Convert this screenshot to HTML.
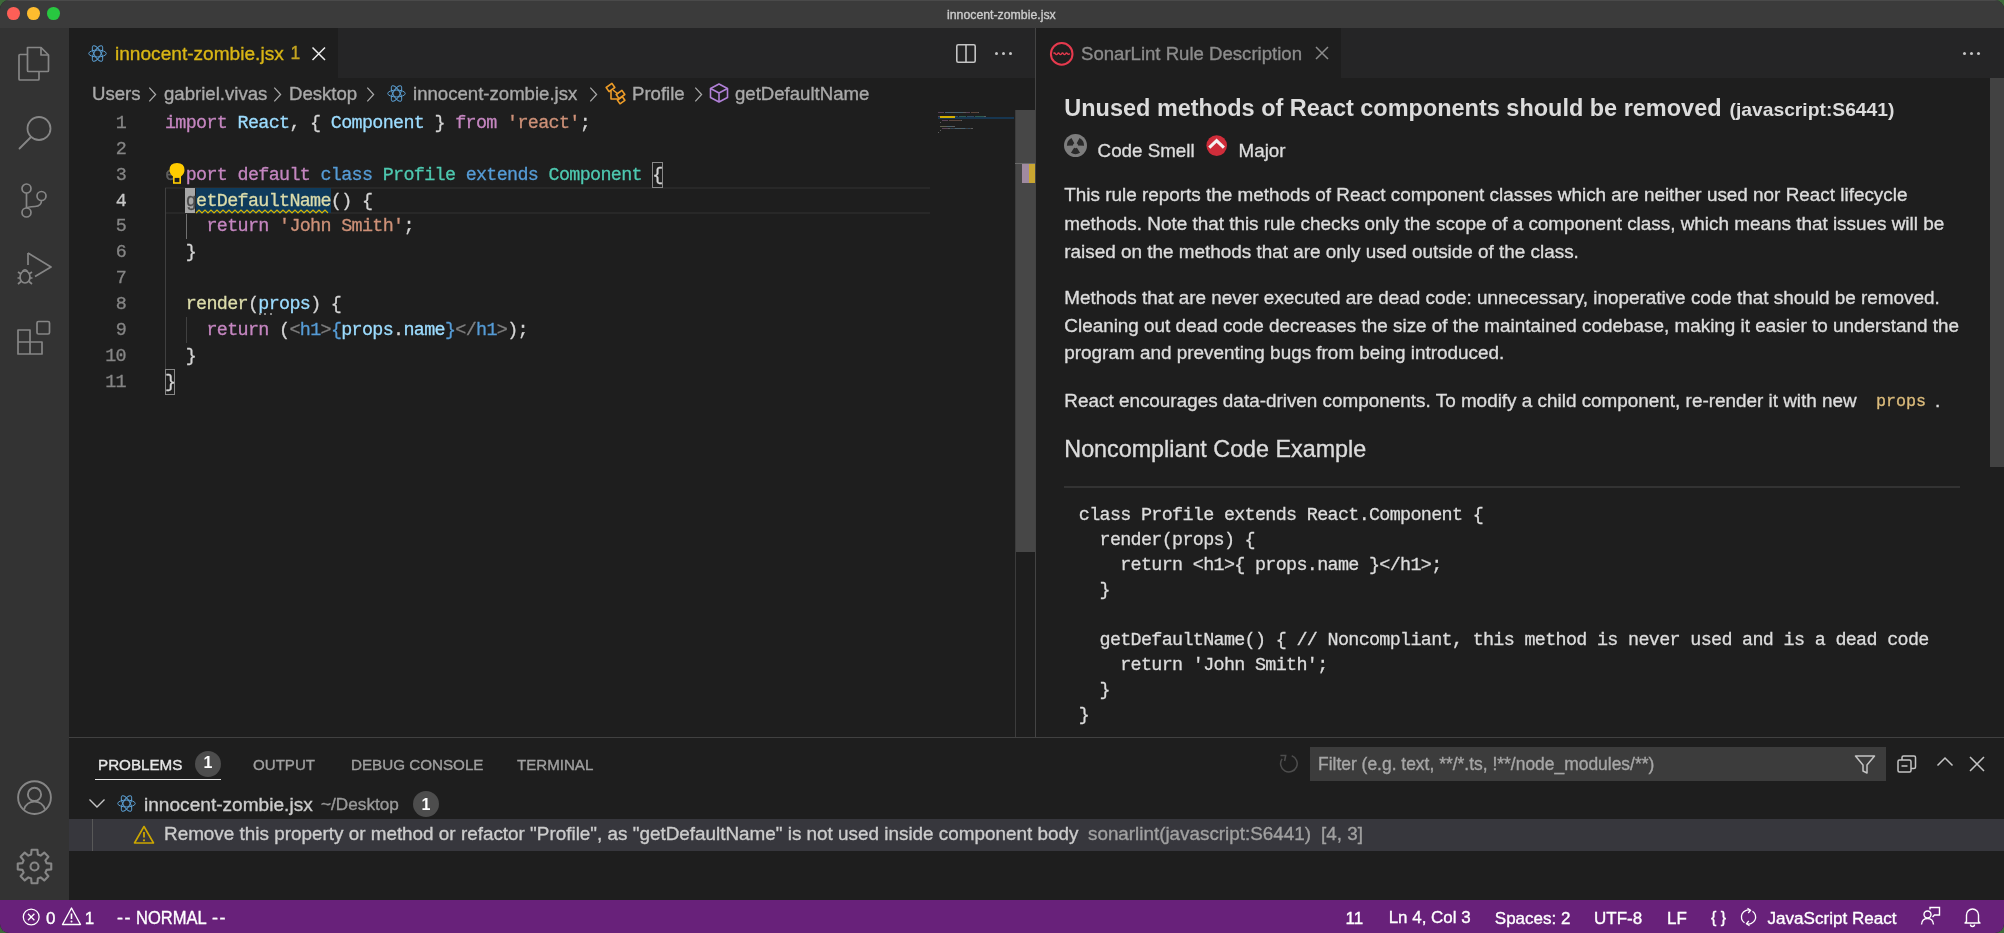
<!DOCTYPE html><html><head><meta charset="utf-8"><style>*{margin:0;padding:0;box-sizing:border-box}html,body{width:2004px;height:933px;overflow:hidden;background:#3d6b3a}#w{position:absolute;left:0;top:0;width:2004px;height:933px;overflow:hidden;border-radius:9px;background:#1e1e1e}svg{overflow:visible}#w{will-change:transform}</style></head><body><div id="w"><div style="position:absolute;left:0px;top:0px;width:2004px;height:28px;background:#3b3b3b;"></div>
<div style="position:absolute;left:0px;top:0px;width:2004px;height:1px;background:#4a4a4a;"></div>
<div style="position:absolute;left:7.3px;top:7.2px;width:12.8px;height:12.8px;border-radius:50%;background:#fe5f57"></div>
<div style="position:absolute;left:27.3px;top:7.2px;width:12.8px;height:12.8px;border-radius:50%;background:#febc2e"></div>
<div style="position:absolute;left:47.3px;top:7.2px;width:12.8px;height:12.8px;border-radius:50%;background:#28c840"></div>
<div style="position:absolute;left:947px;top:8.79px;font:400 12.3px/12.3px 'Liberation Sans',sans-serif;color:#cccccc;white-space:pre;-webkit-text-stroke:0.35px currentColor;">innocent-zombie.jsx</div>
<div style="position:absolute;left:0px;top:28px;width:69px;height:872px;background:#333333;"></div>
<svg style="position:absolute;left:14px;top:42px;" width="40" height="40" viewBox="0 0 40 40"><g fill="none" stroke="#868686" stroke-width="1.7" stroke-linejoin="round"><path d="M13.5 5.5 H27 L34.5 13 V28.5 Q34.5 29.5 33.5 29.5 H14.5 Q13.5 29.5 13.5 28.5 Z"/><path d="M27 5.5 V13 H34.5"/><path d="M13.5 12.5 H6 Q5 12.5 5 13.5 V37 Q5 38 6 38 H24 Q25 38 25 37 V29.5"/></g></svg>
<svg style="position:absolute;left:14px;top:110px;" width="40" height="44" viewBox="0 0 40 44"><g fill="none" stroke="#868686" stroke-width="1.8"><circle cx="25" cy="18.5" r="11.5"/><path d="M17 27 L5.5 38.5" stroke-linecap="round"/></g></svg>
<svg style="position:absolute;left:14px;top:178px;" width="40" height="44" viewBox="0 0 40 44"><g fill="none" stroke="#868686" stroke-width="1.7"><circle cx="12.5" cy="10.5" r="4.5"/><circle cx="12.5" cy="34.5" r="4.5"/><circle cx="27.5" cy="18" r="4.5"/><path d="M12.5 15 V30"/><path d="M27.5 22.5 Q27.5 28 21 28.5 Q13 29 12.5 30"/></g></svg>
<svg style="position:absolute;left:14px;top:248px;" width="44" height="44" viewBox="0 0 44 44"><g fill="none" stroke="#868686" stroke-width="1.7" stroke-linejoin="round"><path d="M14 5 L37 19 L21 28.5"/><path d="M14 5 V17"/><ellipse cx="11" cy="29" rx="5" ry="6"/><path d="M4 24 L7 26 M3.5 30 H6 M4 36 L7 33.5 M18 24 L15 26 M18.5 30 H16 M18 36 L15 33.5 M8.5 23.5 Q11 20 13.5 23.5"/></g></svg>
<svg style="position:absolute;left:14px;top:318px;" width="40" height="40" viewBox="0 0 40 40"><g fill="none" stroke="#868686" stroke-width="1.7" stroke-linejoin="round"><rect x="23" y="3.5" width="12.5" height="12.5" rx="1.5"/><path d="M4 16 H16 V28 H28 V40 H4 Z" transform="translate(0,-4)"/><path d="M16 24 V36 M4 24 H16"/></g></svg>
<svg style="position:absolute;left:14px;top:777px;" width="40" height="40" viewBox="0 0 40 40"><g fill="none" stroke="#868686" stroke-width="1.9"><circle cx="20.5" cy="20.6" r="16.4"/><circle cx="20.5" cy="17.4" r="6.6"/><path d="M10 32.5 Q12.5 24.6 20.5 24.6 Q28.5 24.6 31 32.5"/></g></svg>
<svg style="position:absolute;left:14px;top:846px;" width="40" height="40" viewBox="0 0 40 40"><g fill="none" stroke="#868686" stroke-width="2.1" stroke-linejoin="round"><path d="M32.55 17.17 L37.25 17.58 L37.25 23.42 L32.55 23.83 L31.38 26.66 L34.41 30.28 L30.28 34.41 L26.66 31.38 L23.83 32.55 L23.42 37.25 L17.58 37.25 L17.17 32.55 L14.34 31.38 L10.72 34.41 L6.59 30.28 L9.62 26.66 L8.45 23.83 L3.75 23.42 L3.75 17.58 L8.45 17.17 L9.62 14.34 L6.59 10.72 L10.72 6.59 L14.34 9.62 L17.17 8.45 L17.58 3.75 L23.42 3.75 L23.83 8.45 L26.66 9.62 L30.28 6.59 L34.41 10.72 L31.38 14.34 Z"/><circle cx="20.5" cy="20.5" r="4"/></g></svg>
<div style="position:absolute;left:69px;top:28px;width:967px;height:50px;background:#252526;"></div>
<div style="position:absolute;left:69px;top:28px;width:269px;height:50px;background:#1e1e1e;"></div>
<div style="position:absolute;left:69px;top:78px;width:967px;height:659px;background:#1e1e1e;"></div>
<svg style="position:absolute;left:88px;top:44px;" width="19" height="19" viewBox="0 0 19 19"><g fill="none" stroke="#5a9dd0" stroke-width="1"><ellipse cx="9.5" cy="9.5" rx="8.74" ry="3.42"/><ellipse cx="9.5" cy="9.5" rx="8.74" ry="3.42" transform="rotate(60 9.5 9.5)"/><ellipse cx="9.5" cy="9.5" rx="8.74" ry="3.42" transform="rotate(120 9.5 9.5)"/></g></svg>
<div style="position:absolute;left:115px;top:43.53px;font:400 19.1px/19.1px 'Liberation Sans',sans-serif;color:#d9b615;white-space:pre;-webkit-text-stroke:0.35px currentColor;">innocent-zombie.jsx</div>
<div style="position:absolute;left:290.5px;top:44.89px;font:400 17.5px/17.5px 'Liberation Sans',sans-serif;color:#c4a420;white-space:pre;-webkit-text-stroke:0.35px currentColor;">1</div>
<svg style="position:absolute;left:310px;top:45px;" width="17" height="17" viewBox="0 0 17 17"><path d="M2.5 2.5 L15 15 M15 2.5 L2.5 15" stroke="#ededed" stroke-width="1.5"/></svg>
<svg style="position:absolute;left:954px;top:42px;" width="24" height="22" viewBox="0 0 24 22"><g fill="none" stroke="#c5c5c5" stroke-width="1.6"><rect x="2.8" y="2.8" width="18.4" height="17.4" rx="1.5"/><path d="M12 2.8 V20.2"/></g></svg>
<div style="position:absolute;left:994.5px;top:51.5px;width:3px;height:3px;border-radius:50%;background:#c5c5c5"></div>
<div style="position:absolute;left:1001.5px;top:51.5px;width:3px;height:3px;border-radius:50%;background:#c5c5c5"></div>
<div style="position:absolute;left:1008.5px;top:51.5px;width:3px;height:3px;border-radius:50%;background:#c5c5c5"></div>
<div style="position:absolute;left:92px;top:84.96px;font:400 18.6px/18.6px 'Liberation Sans',sans-serif;color:#a9a9a9;white-space:pre;-webkit-text-stroke:0.35px currentColor;">Users</div>
<svg style="position:absolute;left:146.5px;top:87px;" width="10" height="16" viewBox="0 0 10 16"><path d="M2.3 0.6 L8.6 7.5 L2.3 14.4" fill="none" stroke="#a9a9a9" stroke-width="1.25"/></svg>
<div style="position:absolute;left:164px;top:84.96px;font:400 18.6px/18.6px 'Liberation Sans',sans-serif;color:#a9a9a9;white-space:pre;-webkit-text-stroke:0.35px currentColor;">gabriel.vivas</div>
<svg style="position:absolute;left:271.5px;top:87px;" width="10" height="16" viewBox="0 0 10 16"><path d="M2.3 0.6 L8.6 7.5 L2.3 14.4" fill="none" stroke="#a9a9a9" stroke-width="1.25"/></svg>
<div style="position:absolute;left:289px;top:84.96px;font:400 18.6px/18.6px 'Liberation Sans',sans-serif;color:#a9a9a9;white-space:pre;-webkit-text-stroke:0.35px currentColor;">Desktop</div>
<svg style="position:absolute;left:364.5px;top:87px;" width="10" height="16" viewBox="0 0 10 16"><path d="M2.3 0.6 L8.6 7.5 L2.3 14.4" fill="none" stroke="#a9a9a9" stroke-width="1.25"/></svg>
<svg style="position:absolute;left:387px;top:84px;" width="19" height="19" viewBox="0 0 19 19"><g fill="none" stroke="#5a9dd0" stroke-width="1"><ellipse cx="9.5" cy="9.5" rx="8.74" ry="3.42"/><ellipse cx="9.5" cy="9.5" rx="8.74" ry="3.42" transform="rotate(60 9.5 9.5)"/><ellipse cx="9.5" cy="9.5" rx="8.74" ry="3.42" transform="rotate(120 9.5 9.5)"/></g></svg>
<div style="position:absolute;left:413px;top:84.96px;font:400 18.6px/18.6px 'Liberation Sans',sans-serif;color:#a9a9a9;white-space:pre;-webkit-text-stroke:0.35px currentColor;">innocent-zombie.jsx</div>
<svg style="position:absolute;left:587.5px;top:87px;" width="10" height="16" viewBox="0 0 10 16"><path d="M2.3 0.6 L8.6 7.5 L2.3 14.4" fill="none" stroke="#a9a9a9" stroke-width="1.25"/></svg>
<svg style="position:absolute;left:605px;top:82px;" width="24" height="22" viewBox="0 0 24 22"><g fill="none" stroke="#ee9d28" stroke-width="1.6" stroke-linejoin="round"><rect x="2" y="3" width="7" height="5" transform="rotate(-35 5.5 5.5)"/><path d="M8 8 L13 12"/><rect x="12" y="10" width="7" height="5" transform="rotate(-35 15.5 12.5)"/><rect x="13" y="16" width="6" height="4.5" transform="rotate(-35 16 18)"/><path d="M6 9 V17 H13"/></g></svg>
<div style="position:absolute;left:632px;top:84.96px;font:400 18.6px/18.6px 'Liberation Sans',sans-serif;color:#a9a9a9;white-space:pre;-webkit-text-stroke:0.35px currentColor;">Profile</div>
<svg style="position:absolute;left:692.5px;top:87px;" width="10" height="16" viewBox="0 0 10 16"><path d="M2.3 0.6 L8.6 7.5 L2.3 14.4" fill="none" stroke="#a9a9a9" stroke-width="1.25"/></svg>
<svg style="position:absolute;left:708px;top:82px;" width="22" height="22" viewBox="0 0 22 22"><g fill="none" stroke="#b180d7" stroke-width="1.6" stroke-linejoin="round"><path d="M11 2 L19.5 6.5 V15.5 L11 20 L2.5 15.5 V6.5 Z"/><path d="M2.5 6.5 L11 11 L19.5 6.5 M11 11 V20"/></g></svg>
<div style="position:absolute;left:735px;top:84.96px;font:400 18.6px/18.6px 'Liberation Sans',sans-serif;color:#a9a9a9;white-space:pre;-webkit-text-stroke:0.35px currentColor;">getDefaultName</div>
<div style="position:absolute;left:165px;top:187.2px;width:765px;height:2px;background:#282828;"></div>
<div style="position:absolute;left:165px;top:212.1px;width:765px;height:2px;background:#282828;"></div>
<div style="position:absolute;left:165px;top:187.7px;width:1px;height:181.29999999999998px;background:#404040;"></div>
<div style="position:absolute;left:186px;top:213.6px;width:1px;height:25.9px;background:#707070;"></div>
<div style="position:absolute;left:186px;top:317.2px;width:1px;height:25.9px;background:#404040;"></div>
<div style="position:absolute;left:196.10399999999998px;top:188.2px;width:134.784px;height:25px;background:#0f3b5c;"></div>
<div style="position:absolute;left:184.736px;top:188.2px;width:10.368px;height:25px;background:#a7a7a7;"></div>
<div style="position:absolute;left:652.296px;top:161.8px;width:10.368px;height:25.9px;background:transparent;border:1px solid #888888;"></div>
<div style="position:absolute;left:165.0px;top:369.0px;width:10.368px;height:25.9px;background:transparent;border:1px solid #888888;"></div>
<div style="position:absolute;left:115.632px;top:114.80px;font:400 18.4px/18.4px 'Liberation Mono',monospace;color:#858585;white-space:pre;-webkit-text-stroke:0.3px currentColor;letter-spacing:-0.672px;">1</div>
<div style="position:absolute;left:165px;top:114.80px;font:400 18.4px/18.4px 'Liberation Mono',monospace;color:#d4d4d4;white-space:pre;-webkit-text-stroke:0.3px currentColor;letter-spacing:-0.672px;"><span style="color:#c586c0">import</span><span style="color:#d4d4d4"> </span><span style="color:#9cdcfe">React</span><span style="color:#d4d4d4">, { </span><span style="color:#9cdcfe">Component</span><span style="color:#d4d4d4"> } </span><span style="color:#c586c0">from</span><span style="color:#d4d4d4"> </span><span style="color:#ce9178">&#x27;react&#x27;</span><span style="color:#d4d4d4">;</span></div>
<div style="position:absolute;left:115.632px;top:140.70px;font:400 18.4px/18.4px 'Liberation Mono',monospace;color:#858585;white-space:pre;-webkit-text-stroke:0.3px currentColor;letter-spacing:-0.672px;">2</div>
<div style="position:absolute;left:115.632px;top:166.60px;font:400 18.4px/18.4px 'Liberation Mono',monospace;color:#858585;white-space:pre;-webkit-text-stroke:0.3px currentColor;letter-spacing:-0.672px;">3</div>
<div style="position:absolute;left:165px;top:166.60px;font:400 18.4px/18.4px 'Liberation Mono',monospace;color:#d4d4d4;white-space:pre;-webkit-text-stroke:0.3px currentColor;letter-spacing:-0.672px;"><span style="color:#5e5e5e">e</span><span style="color:#1e1e1e">x</span><span style="color:#c586c0">port default</span><span style="color:#d4d4d4"> </span><span style="color:#569cd6">class</span><span style="color:#d4d4d4"> </span><span style="color:#4ec9b0">Profile</span><span style="color:#d4d4d4"> </span><span style="color:#569cd6">extends</span><span style="color:#d4d4d4"> </span><span style="color:#4ec9b0">Component</span><span style="color:#d4d4d4"> {</span></div>
<div style="position:absolute;left:115.632px;top:192.50px;font:400 18.4px/18.4px 'Liberation Mono',monospace;color:#c6c6c6;white-space:pre;-webkit-text-stroke:0.3px currentColor;letter-spacing:-0.672px;">4</div>
<div style="position:absolute;left:165px;top:192.50px;font:400 18.4px/18.4px 'Liberation Mono',monospace;color:#d4d4d4;white-space:pre;-webkit-text-stroke:0.3px currentColor;letter-spacing:-0.672px;"><span style="color:#d4d4d4">  </span><span style="color:#4a4a4a">g</span><span style="color:#dcdcaa">etDefaultName</span><span style="color:#d4d4d4">() {</span></div>
<div style="position:absolute;left:115.632px;top:218.40px;font:400 18.4px/18.4px 'Liberation Mono',monospace;color:#858585;white-space:pre;-webkit-text-stroke:0.3px currentColor;letter-spacing:-0.672px;">5</div>
<div style="position:absolute;left:165px;top:218.40px;font:400 18.4px/18.4px 'Liberation Mono',monospace;color:#d4d4d4;white-space:pre;-webkit-text-stroke:0.3px currentColor;letter-spacing:-0.672px;"><span style="color:#d4d4d4">    </span><span style="color:#c586c0">return</span><span style="color:#d4d4d4"> </span><span style="color:#ce9178">&#x27;John Smith&#x27;</span><span style="color:#d4d4d4">;</span></div>
<div style="position:absolute;left:115.632px;top:244.30px;font:400 18.4px/18.4px 'Liberation Mono',monospace;color:#858585;white-space:pre;-webkit-text-stroke:0.3px currentColor;letter-spacing:-0.672px;">6</div>
<div style="position:absolute;left:165px;top:244.30px;font:400 18.4px/18.4px 'Liberation Mono',monospace;color:#d4d4d4;white-space:pre;-webkit-text-stroke:0.3px currentColor;letter-spacing:-0.672px;"><span style="color:#d4d4d4">  }</span></div>
<div style="position:absolute;left:115.632px;top:270.20px;font:400 18.4px/18.4px 'Liberation Mono',monospace;color:#858585;white-space:pre;-webkit-text-stroke:0.3px currentColor;letter-spacing:-0.672px;">7</div>
<div style="position:absolute;left:115.632px;top:296.10px;font:400 18.4px/18.4px 'Liberation Mono',monospace;color:#858585;white-space:pre;-webkit-text-stroke:0.3px currentColor;letter-spacing:-0.672px;">8</div>
<div style="position:absolute;left:165px;top:296.10px;font:400 18.4px/18.4px 'Liberation Mono',monospace;color:#d4d4d4;white-space:pre;-webkit-text-stroke:0.3px currentColor;letter-spacing:-0.672px;"><span style="color:#d4d4d4">  </span><span style="color:#dcdcaa">render</span><span style="color:#d4d4d4">(</span><span style="color:#9cdcfe">props</span><span style="color:#d4d4d4">) {</span></div>
<div style="position:absolute;left:115.632px;top:322.00px;font:400 18.4px/18.4px 'Liberation Mono',monospace;color:#858585;white-space:pre;-webkit-text-stroke:0.3px currentColor;letter-spacing:-0.672px;">9</div>
<div style="position:absolute;left:165px;top:322.00px;font:400 18.4px/18.4px 'Liberation Mono',monospace;color:#d4d4d4;white-space:pre;-webkit-text-stroke:0.3px currentColor;letter-spacing:-0.672px;"><span style="color:#d4d4d4">    </span><span style="color:#c586c0">return</span><span style="color:#d4d4d4"> (</span><span style="color:#808080">&lt;</span><span style="color:#569cd6">h1</span><span style="color:#808080">&gt;</span><span style="color:#569cd6">{</span><span style="color:#9cdcfe">props</span><span style="color:#d4d4d4">.</span><span style="color:#9cdcfe">name</span><span style="color:#569cd6">}</span><span style="color:#808080">&lt;/</span><span style="color:#569cd6">h1</span><span style="color:#808080">&gt;</span><span style="color:#d4d4d4">);</span></div>
<div style="position:absolute;left:105.264px;top:347.90px;font:400 18.4px/18.4px 'Liberation Mono',monospace;color:#858585;white-space:pre;-webkit-text-stroke:0.3px currentColor;letter-spacing:-0.672px;">10</div>
<div style="position:absolute;left:165px;top:347.90px;font:400 18.4px/18.4px 'Liberation Mono',monospace;color:#d4d4d4;white-space:pre;-webkit-text-stroke:0.3px currentColor;letter-spacing:-0.672px;"><span style="color:#d4d4d4">  }</span></div>
<div style="position:absolute;left:105.264px;top:373.80px;font:400 18.4px/18.4px 'Liberation Mono',monospace;color:#858585;white-space:pre;-webkit-text-stroke:0.3px currentColor;letter-spacing:-0.672px;">11</div>
<div style="position:absolute;left:165px;top:373.80px;font:400 18.4px/18.4px 'Liberation Mono',monospace;color:#d4d4d4;white-space:pre;-webkit-text-stroke:0.3px currentColor;letter-spacing:-0.672px;"><span style="color:#d4d4d4">}</span></div>
<svg style="position:absolute;left:196.10399999999998px;top:209.7px;" width="136.784" height="5" viewBox="0 0 136.784 5"><polyline points="0.00 3.00 3.00 0.00 6.00 3.00 9.00 0.00 12.00 3.00 15.00 0.00 18.00 3.00 21.00 0.00 24.00 3.00 27.00 0.00 30.00 3.00 33.00 0.00 36.00 3.00 39.00 0.00 42.00 3.00 45.00 0.00 48.00 3.00 51.00 0.00 54.00 3.00 57.00 0.00 60.00 3.00 63.00 0.00 66.00 3.00 69.00 0.00 72.00 3.00 75.00 0.00 78.00 3.00 81.00 0.00 84.00 3.00 87.00 0.00 90.00 3.00 93.00 0.00 96.00 3.00 99.00 0.00 102.00 3.00 105.00 0.00 108.00 3.00 111.00 0.00 114.00 3.00 117.00 0.00 120.00 3.00 123.00 0.00 126.00 3.00 129.00 0.00 132.00 3.00" fill="none" stroke="#d7b400" stroke-width="1.2"/></svg>
<div style="position:absolute;left:258.812px;top:312.79999999999995px;width:2px;height:2px;background:#8a8a8a;"></div>
<div style="position:absolute;left:264.312px;top:312.79999999999995px;width:2px;height:2px;background:#8a8a8a;"></div>
<div style="position:absolute;left:269.812px;top:312.79999999999995px;width:2px;height:2px;background:#8a8a8a;"></div>
<svg style="position:absolute;left:168px;top:162px;" width="18" height="22" viewBox="0 0 18 22"><path d="M9 1 Q16.5 1 16.5 8 Q16.5 11.5 13 14.5 V15.5 H5 V14.5 Q1.5 11.5 1.5 8 Q1.5 1 9 1 Z" fill="#ffcc00"/><rect x="5.8" y="15" width="6.4" height="6" fill="none" stroke="#ffcc00" stroke-width="1.6"/></svg>
<div style="position:absolute;left:1015px;top:110px;width:20px;height:442px;background:#474747;"></div>
<div style="position:absolute;left:1015px;top:110px;width:1px;height:627px;background:#3c3c3c;"></div>
<div style="position:absolute;left:1015px;top:78px;width:20px;height:32px;background:#1e1e1e;"></div>
<div style="position:absolute;left:1015px;top:163px;width:20px;height:1px;background:#6a6a6a;"></div>
<div style="position:absolute;left:1022px;top:164px;width:7px;height:19px;background:#a08aa0;"></div>
<div style="position:absolute;left:1029px;top:164px;width:6px;height:19px;background:#c9a631;"></div>
<div style="position:absolute;left:1035px;top:28px;width:1px;height:709px;background:#444444;"></div>
<div style="position:absolute;left:938px;top:117px;width:76px;height:1.5px;background:#173650;"></div>
<div style="position:absolute;left:938px;top:111.5px;width:6px;height:1.5px;background:#c586c0;opacity:.35"></div>
<div style="position:absolute;left:945px;top:111.5px;width:6px;height:1.5px;background:#9cdcfe;opacity:.35"></div>
<div style="position:absolute;left:951px;top:111.5px;width:3px;height:1.5px;background:#d4d4d4;opacity:.35"></div>
<div style="position:absolute;left:954px;top:111.5px;width:9px;height:1.5px;background:#9cdcfe;opacity:.35"></div>
<div style="position:absolute;left:963px;top:111.5px;width:3px;height:1.5px;background:#d4d4d4;opacity:.35"></div>
<div style="position:absolute;left:966px;top:111.5px;width:4px;height:1.5px;background:#c586c0;opacity:.35"></div>
<div style="position:absolute;left:971px;top:111.5px;width:7px;height:1.5px;background:#ce9178;opacity:.35"></div>
<div style="position:absolute;left:978px;top:111.5px;width:1px;height:1.5px;background:#d4d4d4;opacity:.35"></div>
<div style="position:absolute;left:938px;top:115.5px;width:14px;height:1.5px;background:#c586c0;opacity:.35"></div>
<div style="position:absolute;left:953px;top:115.5px;width:5px;height:1.5px;background:#569cd6;opacity:.35"></div>
<div style="position:absolute;left:959px;top:115.5px;width:7px;height:1.5px;background:#4ec9b0;opacity:.35"></div>
<div style="position:absolute;left:967px;top:115.5px;width:7px;height:1.5px;background:#569cd6;opacity:.35"></div>
<div style="position:absolute;left:975px;top:115.5px;width:9px;height:1.5px;background:#4ec9b0;opacity:.35"></div>
<div style="position:absolute;left:984px;top:115.5px;width:2px;height:1.5px;background:#d4d4d4;opacity:.35"></div>
<div style="position:absolute;left:940px;top:116.3px;width:15px;height:2px;background:#d4ae00;"></div>
<div style="position:absolute;left:942px;top:119.5px;width:6px;height:1.5px;background:#c586c0;opacity:.35"></div>
<div style="position:absolute;left:949px;top:119.5px;width:12px;height:1.5px;background:#ce9178;opacity:.35"></div>
<div style="position:absolute;left:961px;top:119.5px;width:1px;height:1.5px;background:#d4d4d4;opacity:.35"></div>
<div style="position:absolute;left:940px;top:121.5px;width:1px;height:1.5px;background:#d4d4d4;opacity:.35"></div>
<div style="position:absolute;left:940px;top:125.5px;width:6px;height:1.5px;background:#dcdcaa;opacity:.35"></div>
<div style="position:absolute;left:946px;top:125.5px;width:1px;height:1.5px;background:#d4d4d4;opacity:.35"></div>
<div style="position:absolute;left:947px;top:125.5px;width:5px;height:1.5px;background:#9cdcfe;opacity:.35"></div>
<div style="position:absolute;left:952px;top:125.5px;width:3px;height:1.5px;background:#d4d4d4;opacity:.35"></div>
<div style="position:absolute;left:942px;top:127.5px;width:6px;height:1.5px;background:#c586c0;opacity:.35"></div>
<div style="position:absolute;left:948px;top:127.5px;width:2px;height:1.5px;background:#d4d4d4;opacity:.35"></div>
<div style="position:absolute;left:950px;top:127.5px;width:1px;height:1.5px;background:#808080;opacity:.35"></div>
<div style="position:absolute;left:951px;top:127.5px;width:2px;height:1.5px;background:#569cd6;opacity:.35"></div>
<div style="position:absolute;left:953px;top:127.5px;width:1px;height:1.5px;background:#808080;opacity:.35"></div>
<div style="position:absolute;left:954px;top:127.5px;width:1px;height:1.5px;background:#569cd6;opacity:.35"></div>
<div style="position:absolute;left:955px;top:127.5px;width:5px;height:1.5px;background:#9cdcfe;opacity:.35"></div>
<div style="position:absolute;left:960px;top:127.5px;width:1px;height:1.5px;background:#d4d4d4;opacity:.35"></div>
<div style="position:absolute;left:961px;top:127.5px;width:4px;height:1.5px;background:#9cdcfe;opacity:.35"></div>
<div style="position:absolute;left:965px;top:127.5px;width:1px;height:1.5px;background:#569cd6;opacity:.35"></div>
<div style="position:absolute;left:966px;top:127.5px;width:2px;height:1.5px;background:#808080;opacity:.35"></div>
<div style="position:absolute;left:968px;top:127.5px;width:2px;height:1.5px;background:#569cd6;opacity:.35"></div>
<div style="position:absolute;left:970px;top:127.5px;width:1px;height:1.5px;background:#808080;opacity:.35"></div>
<div style="position:absolute;left:971px;top:127.5px;width:2px;height:1.5px;background:#d4d4d4;opacity:.35"></div>
<div style="position:absolute;left:940px;top:129.5px;width:1px;height:1.5px;background:#d4d4d4;opacity:.35"></div>
<div style="position:absolute;left:938px;top:131.5px;width:1px;height:1.5px;background:#d4d4d4;opacity:.35"></div>
<div style="position:absolute;left:1036px;top:28px;width:968px;height:50px;background:#252526;"></div>
<div style="position:absolute;left:1036px;top:28px;width:305px;height:50px;background:#1e1e1e;"></div>
<div style="position:absolute;left:1036px;top:78px;width:968px;height:659px;background:#1e1e1e;"></div>
<svg style="position:absolute;left:1049px;top:41px;" width="26" height="26" viewBox="0 0 26 26"><circle cx="12.7" cy="12.9" r="10.8" fill="none" stroke="#e63a4e" stroke-width="2"/><path d="M4.5 12.5 Q5.5 11.3 6.5 12.8 Q7.5 14.2 8.5 12.8 Q9.5 11.3 10.5 12.8 Q11.5 14.2 12.5 12.8 Q13.5 11.3 14.5 12.8 Q15.5 14.2 16.5 12.8 Q17.5 11.3 18.5 12.8 Q19.5 14 20.7 12.5" fill="none" stroke="#e63a4e" stroke-width="1.4"/></svg>
<div style="position:absolute;left:1081px;top:44.97px;font:400 18.58px/18.58px 'Liberation Sans',sans-serif;color:#8c8c8c;white-space:pre;-webkit-text-stroke:0.35px currentColor;">SonarLint Rule Description</div>
<svg style="position:absolute;left:1314px;top:45px;" width="16" height="16" viewBox="0 0 16 16"><path d="M2 2 L14 14 M14 2 L2 14" stroke="#8c8c8c" stroke-width="1.5"/></svg>
<div style="position:absolute;left:1962.5px;top:51.5px;width:3px;height:3px;border-radius:50%;background:#c5c5c5"></div>
<div style="position:absolute;left:1969.5px;top:51.5px;width:3px;height:3px;border-radius:50%;background:#c5c5c5"></div>
<div style="position:absolute;left:1976.5px;top:51.5px;width:3px;height:3px;border-radius:50%;background:#c5c5c5"></div>
<div style="position:absolute;left:1990px;top:78px;width:14px;height:389px;background:#424242;"></div>
<div style="position:absolute;left:1064.3px;top:96.92px;font:700 23.48px/23.48px 'Liberation Sans',sans-serif;color:#dcdcdc;white-space:pre;">Unused methods of React components should be removed</div>
<div style="position:absolute;left:1729.5px;top:100.48px;font:700 19.28px/19.28px 'Liberation Sans',sans-serif;color:#dcdcdc;white-space:pre;">(javascript:S6441)</div>
<svg style="position:absolute;left:1063px;top:133px;filter:blur(0.4px)" width="25" height="25" viewBox="0 0 25 25"><circle cx="12.5" cy="12.5" r="11.5" fill="#7d7d7d"/><g fill="#2a2a2a"><path d="M3.91 12.80 A8.6 8.6 0 0 1 8.46 4.91 L11.28 10.20 A2.6 2.6 0 0 0 9.90 12.59 Z"/><path d="M16.54 4.91 A8.6 8.6 0 0 1 21.09 12.80 L15.10 12.59 A2.6 2.6 0 0 0 13.72 10.20 Z"/><path d="M17.06 19.79 A8.6 8.6 0 0 1 7.94 19.79 L11.12 14.70 A2.6 2.6 0 0 0 13.88 14.70 Z"/></g></svg>
<div style="position:absolute;left:1097.6px;top:141.61px;font:400 18.77px/18.77px 'Liberation Sans',sans-serif;color:#dcdcdc;white-space:pre;-webkit-text-stroke:0.35px currentColor;">Code Smell</div>
<svg style="position:absolute;left:1206px;top:135px;" width="22" height="22" viewBox="0 0 22 22"><circle cx="10.7" cy="10.6" r="10.3" fill="#cf2d3a"/><path d="M3.3 12.6 L10.6 5.6 L17.9 12.6" fill="none" stroke="#f4f4f4" stroke-width="3"/></svg>
<div style="position:absolute;left:1238.6px;top:141.61px;font:400 18.77px/18.77px 'Liberation Sans',sans-serif;color:#dcdcdc;white-space:pre;-webkit-text-stroke:0.35px currentColor;">Major</div>
<div style="position:absolute;left:1064.3px;top:186.20px;font:400 18.9px/18.9px 'Liberation Sans',sans-serif;color:#dcdcdc;white-space:pre;-webkit-text-stroke:0.35px currentColor;">This rule reports the methods of React component classes which are neither used nor React lifecycle</div>
<div style="position:absolute;left:1064.3px;top:214.50px;font:400 18.9px/18.9px 'Liberation Sans',sans-serif;color:#dcdcdc;white-space:pre;-webkit-text-stroke:0.35px currentColor;">methods. Note that this rule checks only the scope of a component class, which means that issues will be</div>
<div style="position:absolute;left:1064.3px;top:242.70px;font:400 18.9px/18.9px 'Liberation Sans',sans-serif;color:#dcdcdc;white-space:pre;-webkit-text-stroke:0.35px currentColor;">raised on the methods that are only used outside of the class.</div>
<div style="position:absolute;left:1064.3px;top:288.80px;font:400 18.9px/18.9px 'Liberation Sans',sans-serif;color:#dcdcdc;white-space:pre;-webkit-text-stroke:0.35px currentColor;">Methods that are never executed are dead code: unnecessary, inoperative code that should be removed.</div>
<div style="position:absolute;left:1064.3px;top:316.50px;font:400 18.9px/18.9px 'Liberation Sans',sans-serif;color:#dcdcdc;white-space:pre;-webkit-text-stroke:0.35px currentColor;">Cleaning out dead code decreases the size of the maintained codebase, making it easier to understand the</div>
<div style="position:absolute;left:1064.3px;top:344.30px;font:400 18.9px/18.9px 'Liberation Sans',sans-serif;color:#dcdcdc;white-space:pre;-webkit-text-stroke:0.35px currentColor;">program and preventing bugs from being introduced.</div>
<div style="position:absolute;left:1064.3px;top:391.50px;font:400 18.9px/18.9px 'Liberation Sans',sans-serif;color:#dcdcdc;white-space:pre;-webkit-text-stroke:0.35px currentColor;">React encourages data-driven components. To modify a child component, re-render it with new</div>
<div style="position:absolute;left:1876px;top:394.00px;font:400 16.7px/16.7px 'Liberation Mono',monospace;color:#dcbc7c;white-space:pre;-webkit-text-stroke:0.3px currentColor;">props</div>
<div style="position:absolute;left:1935px;top:391.50px;font:400 18.9px/18.9px 'Liberation Sans',sans-serif;color:#dcdcdc;white-space:pre;-webkit-text-stroke:0.35px currentColor;">.</div>
<div style="position:absolute;left:1064.3px;top:438.46px;font:400 23.32px/23.32px 'Liberation Sans',sans-serif;color:#dcdcdc;white-space:pre;-webkit-text-stroke:0.35px currentColor;">Noncompliant Code Example</div>
<div style="position:absolute;left:1064px;top:486px;width:896px;height:1.5px;background:#333333;"></div>
<div style="position:absolute;left:1078.8px;top:506.60px;font:400 18.4px/18.4px 'Liberation Mono',monospace;color:#dcdcdc;white-space:pre;-webkit-text-stroke:0.3px currentColor;letter-spacing:-0.672px;">class Profile extends React.Component {</div>
<div style="position:absolute;left:1078.8px;top:531.60px;font:400 18.4px/18.4px 'Liberation Mono',monospace;color:#dcdcdc;white-space:pre;-webkit-text-stroke:0.3px currentColor;letter-spacing:-0.672px;">  render(props) {</div>
<div style="position:absolute;left:1078.8px;top:556.60px;font:400 18.4px/18.4px 'Liberation Mono',monospace;color:#dcdcdc;white-space:pre;-webkit-text-stroke:0.3px currentColor;letter-spacing:-0.672px;">    return &lt;h1&gt;{ props.name }&lt;/h1&gt;;</div>
<div style="position:absolute;left:1078.8px;top:581.60px;font:400 18.4px/18.4px 'Liberation Mono',monospace;color:#dcdcdc;white-space:pre;-webkit-text-stroke:0.3px currentColor;letter-spacing:-0.672px;">  }</div>
<div style="position:absolute;left:1078.8px;top:631.60px;font:400 18.4px/18.4px 'Liberation Mono',monospace;color:#dcdcdc;white-space:pre;-webkit-text-stroke:0.3px currentColor;letter-spacing:-0.672px;">  getDefaultName() { // Noncompliant, this method is never used and is a dead code</div>
<div style="position:absolute;left:1078.8px;top:656.60px;font:400 18.4px/18.4px 'Liberation Mono',monospace;color:#dcdcdc;white-space:pre;-webkit-text-stroke:0.3px currentColor;letter-spacing:-0.672px;">    return &#x27;John Smith&#x27;;</div>
<div style="position:absolute;left:1078.8px;top:681.60px;font:400 18.4px/18.4px 'Liberation Mono',monospace;color:#dcdcdc;white-space:pre;-webkit-text-stroke:0.3px currentColor;letter-spacing:-0.672px;">  }</div>
<div style="position:absolute;left:1078.8px;top:706.60px;font:400 18.4px/18.4px 'Liberation Mono',monospace;color:#dcdcdc;white-space:pre;-webkit-text-stroke:0.3px currentColor;letter-spacing:-0.672px;">}</div>
<div style="position:absolute;left:69px;top:737px;width:1935px;height:163px;background:#1e1e1e;"></div>
<div style="position:absolute;left:69px;top:737px;width:1935px;height:1px;background:#414141;"></div>
<div style="position:absolute;left:98px;top:756.73px;font:400 15.2px/15.2px 'Liberation Sans',sans-serif;color:#e7e7e7;white-space:pre;-webkit-text-stroke:0.35px currentColor;">PROBLEMS</div>
<div style="position:absolute;left:195px;top:751px;width:26px;height:26px;border-radius:13px;background:#4d4d4d"></div>
<div style="position:absolute;left:203.5px;top:754.66px;font:700 16px/16px 'Liberation Sans',sans-serif;color:#ffffff;white-space:pre;">1</div>
<div style="position:absolute;left:95px;top:779px;width:126px;height:1px;background:#e7e7e7;"></div>
<div style="position:absolute;left:253px;top:756.82px;font:400 15.1px/15.1px 'Liberation Sans',sans-serif;color:#a0a0a0;white-space:pre;-webkit-text-stroke:0.35px currentColor;">OUTPUT</div>
<div style="position:absolute;left:351px;top:756.73px;font:400 15.2px/15.2px 'Liberation Sans',sans-serif;color:#a0a0a0;white-space:pre;-webkit-text-stroke:0.35px currentColor;">DEBUG CONSOLE</div>
<div style="position:absolute;left:517px;top:756.82px;font:400 15.1px/15.1px 'Liberation Sans',sans-serif;color:#a0a0a0;white-space:pre;-webkit-text-stroke:0.35px currentColor;">TERMINAL</div>
<svg style="position:absolute;left:1278px;top:753px;" width="22" height="22" viewBox="0 0 22 22"><path d="M13.74 2.8 A8.3 8.3 0 1 1 4.1 5.84" fill="none" stroke="#4d4d4d" stroke-width="1.5"/><path d="M2.4 2.5 L7.7 2.5 L6.6 8" fill="none" stroke="#4d4d4d" stroke-width="1.5"/></svg>
<div style="position:absolute;left:1310px;top:747px;width:576px;height:34px;background:#3c3c3c;"></div>
<div style="position:absolute;left:1318px;top:755.93px;font:400 17.45px/17.45px 'Liberation Sans',sans-serif;color:#a6a6a6;white-space:pre;-webkit-text-stroke:0.35px currentColor;">Filter (e.g. text, **/*.ts, !**/node_modules/**)</div>
<svg style="position:absolute;left:1853px;top:753px;" width="24" height="22" viewBox="0 0 24 22"><path d="M2.5 3 H21.5 L14 12 V20 L10 18 V12 Z" fill="none" stroke="#c5c5c5" stroke-width="1.5" stroke-linejoin="round"/></svg>
<svg style="position:absolute;left:1896px;top:753px;" width="22" height="22" viewBox="0 0 22 22"><g fill="none" stroke="#c5c5c5" stroke-width="1.5"><rect x="2" y="7" width="13" height="12" rx="1.5"/><path d="M6 7 V4.5 Q6 3 7.5 3 H18 Q19.5 3 19.5 4.5 V14 Q19.5 15.5 18 15.5 H15"/><path d="M5.5 13 H11.5"/></g></svg>
<svg style="position:absolute;left:1935px;top:754px;" width="20" height="16" viewBox="0 0 20 16"><path d="M2.5 11.5 L10 4 L17.5 11.5" fill="none" stroke="#c5c5c5" stroke-width="1.5"/></svg>
<svg style="position:absolute;left:1967px;top:754px;" width="20" height="20" viewBox="0 0 20 20"><path d="M3 3 L17 17 M17 3 L3 17" stroke="#c5c5c5" stroke-width="1.5"/></svg>
<svg style="position:absolute;left:87px;top:795px;" width="20" height="16" viewBox="0 0 20 16"><path d="M2.5 4.5 L10 12 L17.5 4.5" fill="none" stroke="#c5c5c5" stroke-width="1.4"/></svg>
<svg style="position:absolute;left:117px;top:793.5px;" width="19" height="19" viewBox="0 0 19 19"><g fill="none" stroke="#5a9dd0" stroke-width="1"><ellipse cx="9.5" cy="9.5" rx="8.74" ry="3.42"/><ellipse cx="9.5" cy="9.5" rx="8.74" ry="3.42" transform="rotate(60 9.5 9.5)"/><ellipse cx="9.5" cy="9.5" rx="8.74" ry="3.42" transform="rotate(120 9.5 9.5)"/></g></svg>
<div style="position:absolute;left:144px;top:794.53px;font:400 19.1px/19.1px 'Liberation Sans',sans-serif;color:#cccccc;white-space:pre;-webkit-text-stroke:0.35px currentColor;">innocent-zombie.jsx</div>
<div style="position:absolute;left:321px;top:796.14px;font:400 17.2px/17.2px 'Liberation Sans',sans-serif;color:#9a9a9a;white-space:pre;-webkit-text-stroke:0.35px currentColor;">~/Desktop</div>
<div style="position:absolute;left:413px;top:791px;width:26px;height:26px;border-radius:13px;background:#4d4d4d"></div>
<div style="position:absolute;left:421.5px;top:797.46px;font:700 16px/16px 'Liberation Sans',sans-serif;color:#ffffff;white-space:pre;">1</div>
<div style="position:absolute;left:69px;top:819px;width:1935px;height:32px;background:#37373d;"></div>
<div style="position:absolute;left:92px;top:819px;width:1px;height:32px;background:#585858;"></div>
<svg style="position:absolute;left:133px;top:824px;" width="22" height="21" viewBox="0 0 22 21"><path d="M11 2.5 L20.5 19 H1.5 Z" fill="none" stroke="#cca700" stroke-width="1.6" stroke-linejoin="round"/><path d="M11 8 V13.5" stroke="#cca700" stroke-width="1.8"/><circle cx="11" cy="16.3" r="1.1" fill="#cca700"/></svg>
<div style="position:absolute;left:164px;top:825.01px;font:400 18.89px/18.89px 'Liberation Sans',sans-serif;color:#cccccc;white-space:pre;-webkit-text-stroke:0.35px currentColor;">Remove this property or method or refactor &quot;Profile&quot;, as &quot;getDefaultName&quot; is not used inside component body</div>
<div style="position:absolute;left:1088px;top:825.05px;font:400 18.84px/18.84px 'Liberation Sans',sans-serif;color:#a0a0a0;white-space:pre;-webkit-text-stroke:0.35px currentColor;">sonarlint(javascript:S6441)</div>
<div style="position:absolute;left:1321px;top:825.05px;font:400 18.84px/18.84px 'Liberation Sans',sans-serif;color:#a0a0a0;white-space:pre;-webkit-text-stroke:0.35px currentColor;">[4, 3]</div>
<div style="position:absolute;left:0px;top:900px;width:2004px;height:33px;background:#68217a;"></div>
<svg style="position:absolute;left:21px;top:907px;" width="21" height="21" viewBox="0 0 21 21"><circle cx="10.2" cy="10" r="7.9" fill="none" stroke="#fff" stroke-width="1.3"/><path d="M7 6.8 L13.4 13.2 M13.4 6.8 L7 13.2" stroke="#fff" stroke-width="1.3"/></svg>
<div style="position:absolute;left:46px;top:910.31px;font:400 17px/17px 'Liberation Sans',sans-serif;color:#ffffff;white-space:pre;-webkit-text-stroke:0.35px currentColor;">0</div>
<svg style="position:absolute;left:61px;top:906px;" width="21" height="20" viewBox="0 0 21 20"><path d="M10.5 2 L19.5 18.5 H1.5 Z" fill="none" stroke="#fff" stroke-width="1.4" stroke-linejoin="round"/><path d="M10.5 7.5 V13" stroke="#fff" stroke-width="1.6"/><circle cx="10.5" cy="15.5" r="1" fill="#fff"/></svg>
<div style="position:absolute;left:84.8px;top:910.31px;font:400 17px/17px 'Liberation Sans',sans-serif;color:#ffffff;white-space:pre;-webkit-text-stroke:0.35px currentColor;">1</div>
<div style="position:absolute;left:117px;top:909.46px;font:400 18px/18px 'Liberation Sans',sans-serif;color:#ffffff;white-space:pre;-webkit-text-stroke:0.35px currentColor;letter-spacing:1.5px">--</div>
<div style="position:absolute;left:136.3px;top:909.46px;font:400 18px/18px 'Liberation Sans',sans-serif;color:#ffffff;white-space:pre;-webkit-text-stroke:0.35px currentColor;transform:scaleX(0.918);transform-origin:0 0">NORMAL</div>
<div style="position:absolute;left:212px;top:909.46px;font:400 18px/18px 'Liberation Sans',sans-serif;color:#ffffff;white-space:pre;-webkit-text-stroke:0.35px currentColor;letter-spacing:1.5px">--</div>
<div style="position:absolute;left:1345.5px;top:910.31px;font:400 17px/17px 'Liberation Sans',sans-serif;color:#ffffff;white-space:pre;-webkit-text-stroke:0.35px currentColor;">11</div>
<div style="position:absolute;left:1388.7px;top:910.35px;font:400 16.95px/16.95px 'Liberation Sans',sans-serif;color:#ffffff;white-space:pre;-webkit-text-stroke:0.35px currentColor;">Ln 4, Col 3</div>
<div style="position:absolute;left:1494.8px;top:910.31px;font:400 17px/17px 'Liberation Sans',sans-serif;color:#ffffff;white-space:pre;-webkit-text-stroke:0.35px currentColor;">Spaces: 2</div>
<div style="position:absolute;left:1594px;top:910.31px;font:400 17px/17px 'Liberation Sans',sans-serif;color:#ffffff;white-space:pre;-webkit-text-stroke:0.35px currentColor;">UTF-8</div>
<div style="position:absolute;left:1667px;top:910.31px;font:400 17px/17px 'Liberation Sans',sans-serif;color:#ffffff;white-space:pre;-webkit-text-stroke:0.35px currentColor;">LF</div>
<div style="position:absolute;left:1711px;top:909.66px;font:400 16px/16px 'Liberation Sans',sans-serif;color:#ffffff;white-space:pre;-webkit-text-stroke:0.35px currentColor;">{ }</div>
<svg style="position:absolute;left:1739px;top:907px;" width="19" height="20" viewBox="0 0 19 20"><g fill="none" stroke="#fff" stroke-width="1.3"><path d="M11.5 3.3 A7 7 0 0 0 5.5 15.8"/><path d="M8.5 1.2 L11.5 3.3 L9.2 6"/><path d="M7.5 16.7 A7 7 0 0 0 13.5 4.2"/><path d="M10.5 18.8 L7.5 16.7 L9.8 14"/></g></svg>
<div style="position:absolute;left:1767.5px;top:910.25px;font:400 17.07px/17.07px 'Liberation Sans',sans-serif;color:#ffffff;white-space:pre;-webkit-text-stroke:0.35px currentColor;">JavaScript React</div>
<svg style="position:absolute;left:1920px;top:906px;" width="21" height="20" viewBox="0 0 21 20"><g fill="none" stroke="#fff" stroke-width="1.4"><circle cx="7.5" cy="8.5" r="3.5"/><path d="M1.5 18.5 Q2 12.5 7.5 12.5 Q13 12.5 13.5 18.5"/><path d="M10 3.5 V1.5 H19.5 V9 H14.5 L12.5 11"/></g></svg>
<svg style="position:absolute;left:1963px;top:906px;" width="19" height="21" viewBox="0 0 19 21"><g fill="none" stroke="#fff" stroke-width="1.4" stroke-linejoin="round"><path d="M3.5 15.5 V9 A6 6 0 0 1 15.5 9 V15.5 L17 17 H2 Z"/><path d="M7.5 18.5 A2 2 0 0 0 11.5 18.5"/></g></svg></div></body></html>
